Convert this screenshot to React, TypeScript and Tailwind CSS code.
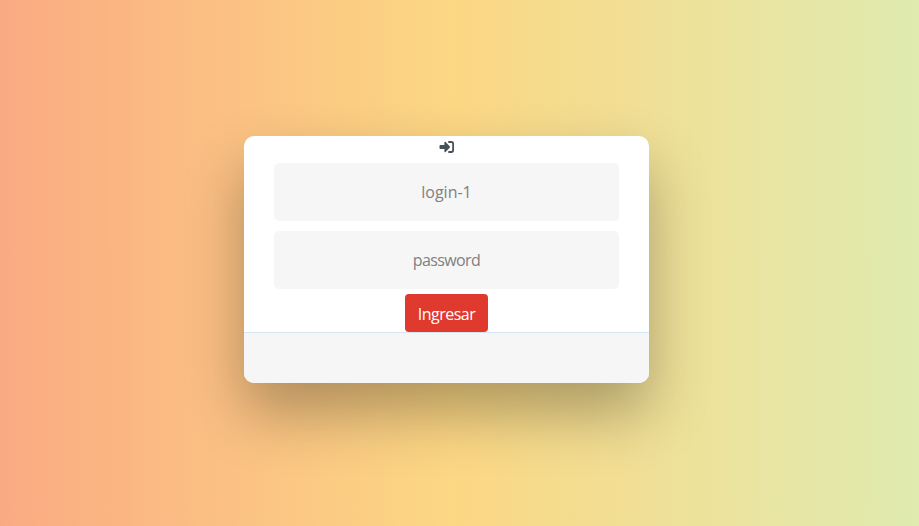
import React from "react";

function SignInIcon() {
  return (
    <svg width="16" height="14" viewBox="0 0 16 14" fill="none" aria-hidden="true">
      <path
        d="M1.4 5h4V2.4c0-.7.7-1 1.2-.5l4.1 4.4c.4.4.4 1 0 1.4l-4.1 4.4c-.5.5-1.2.2-1.2-.5V9h-4c-.5 0-.9-.4-.9-.9V5.9c0-.5.4-.9.9-.9Z"
        fill="currentColor"
      />
      <path
        d="M10 2h2.4c1 0 1.7.7 1.7 1.7v6.6c0 1-.7 1.7-1.7 1.7H10"
        stroke="currentColor"
        strokeWidth="1.8"
        strokeLinecap="round"
      />
    </svg>
  );
}

export default function App() {
  return (
    <main className="flex h-[526px] w-full justify-center bg-[linear-gradient(90deg,#faaa82_0%,#fcd784_49%,#dfebb0_100%)] pt-[136px] pr-[26px] font-['Open_Sans',sans-serif]">
      <section className="h-[247px] w-[405px] overflow-hidden rounded-[10px] bg-white text-center shadow-[0_30px_60px_0_rgba(0,0,0,0.3)]">
        <div className="flex h-[22px] items-center justify-center text-[#4a5057]">
          <SignInIcon />
        </div>
        <form className="flex flex-col items-center">
          <input
            type="text"
            placeholder="login-1"
            className="mt-[5px] h-[58px] w-[345px] rounded-[5px] bg-[#f6f6f6] text-center text-[16px] placeholder:text-[#808080]"
          />
          <input
            type="password"
            placeholder="password"
            className="mt-[10px] h-[58px] w-[345px] rounded-[5px] bg-[#f6f6f6] text-center text-[16px] tracking-[-0.6px] placeholder:text-[#808080]"
          />
          <button
            type="button"
            className="mt-[5px] h-[38px] w-[83px] rounded-[4px] bg-[#e0392d] pt-px text-[16px] tracking-[-0.5px] text-white"
          >
            Ingresar
          </button>
        </form>
        <footer className="h-[51px] border-t border-[#d5e6f3] bg-[#f6f6f6]" />
      </section>
    </main>
  );
}
